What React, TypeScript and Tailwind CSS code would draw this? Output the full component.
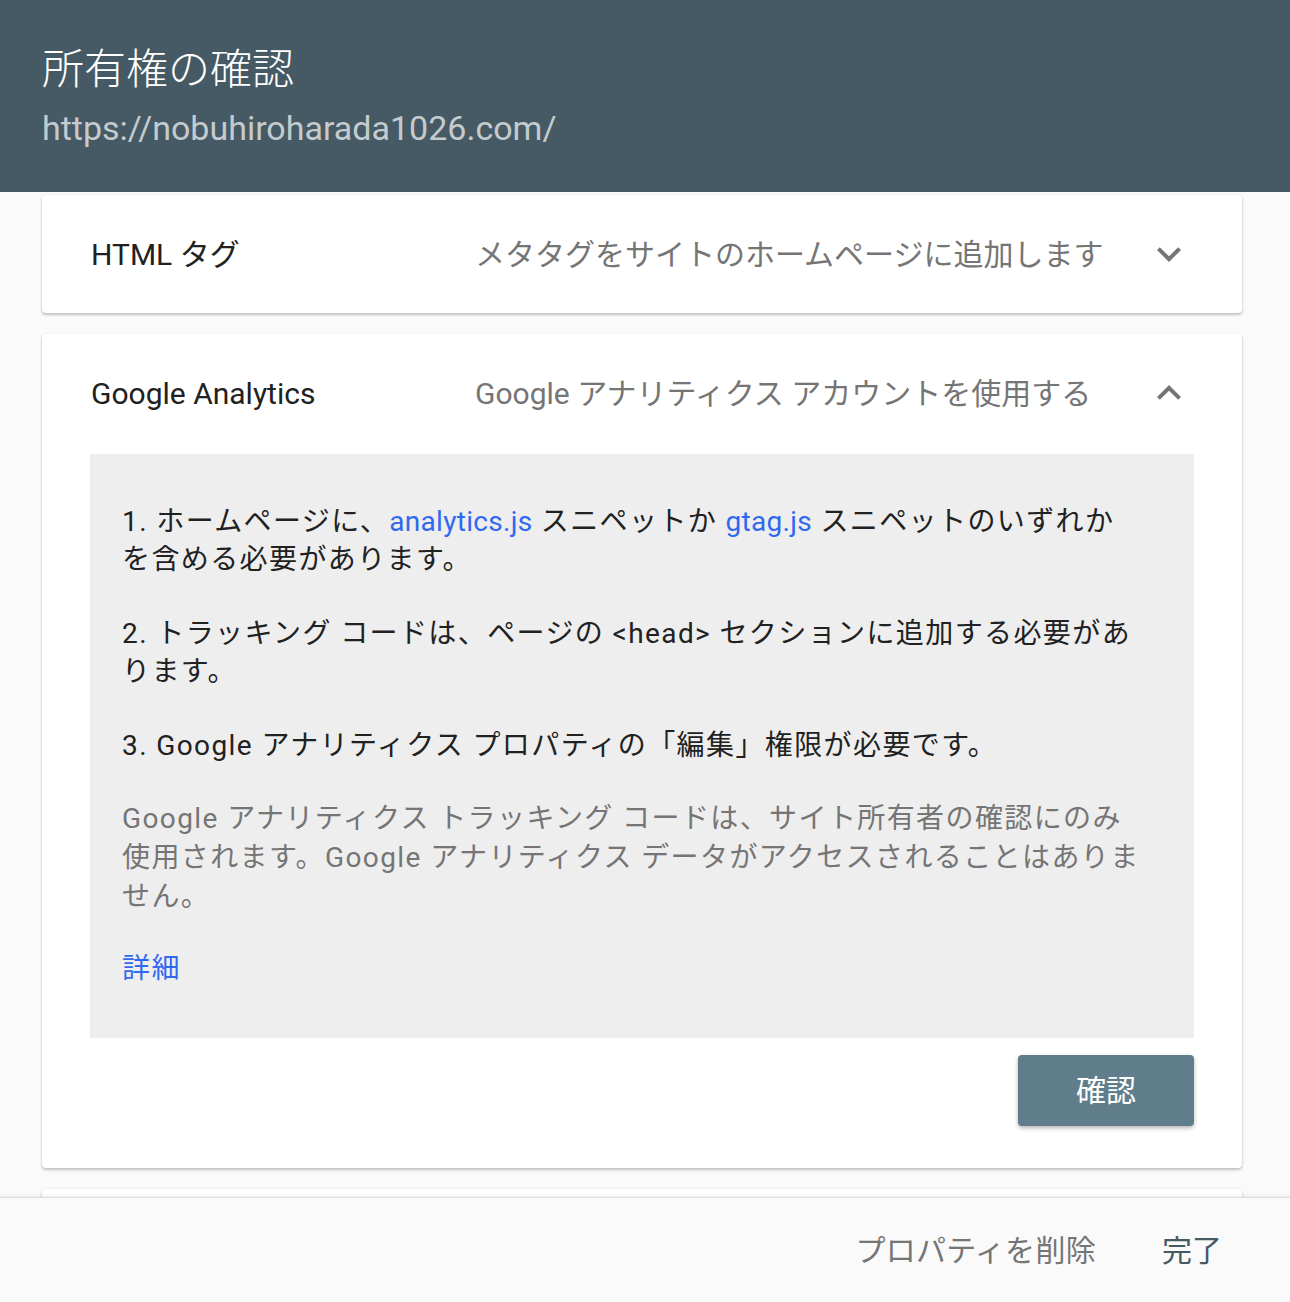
import React from 'react';

const FONT = "Roboto, 'Noto Sans CJK JP', 'Noto Sans', sans-serif";

const Chevron: React.FC<{ up?: boolean }> = ({ up }) => (
  <svg width="48" height="48" viewBox="0 0 24 24" className="shrink-0">
    <path
      d={up ? 'M7.41 15.41 12 10.83l4.59 4.58L18 14l-6-6-6 6z' : 'M7.41 8.59 12 13.17l4.59-4.58L18 10l-6 6-6-6z'}
      fill="#757575"
    />
  </svg>
);

const PanelHeader: React.FC<{ title: string; desc: string; up?: boolean }> = ({ title, desc, up }) => (
  <div className="flex h-[118px] items-center pl-[49px] pr-[49px]">
    <div className="w-[384px] shrink-0 text-[30px] text-[#212121]">{title}</div>
    <div className="flex-1 text-[30px] text-[#757575]">{desc}</div>
    <Chevron up={up} />
  </div>
);

const cardShadow = 'shadow-[0_2px_3px_rgba(0,0,0,0.22),0_0_2px_rgba(0,0,0,0.10)]';

export default function App() {
  return (
    <div className="flex h-[1302px] w-full flex-col overflow-hidden bg-[#fafafa]" style={{ fontFamily: FONT }}>
      {/* ヘッダー */}
      <div className="shrink-0 bg-[#455a64] px-[42px] pt-[44px] pb-[44px]">
        <div className="text-[42px] font-light leading-[52px] text-white">所有権の確認</div>
        <div className="mt-[12px] text-[34px] leading-[40px] text-white/70">https://nobuhiroharada1026.com/</div>
      </div>

      {/* パネル一覧 */}
      <div className="flex min-h-0 flex-1 flex-col gap-[21px] overflow-hidden pl-[42px] pr-[48px] pt-[3px]">
        <div className={`shrink-0 rounded bg-white ${cardShadow}`}>
          <PanelHeader title="HTML タグ" desc="メタタグをサイトのホームページに追加します" />
        </div>

        <div className={`shrink-0 rounded bg-white pb-[42px] ${cardShadow}`}>
          <PanelHeader title="Google Analytics" desc="Google アナリティクス アカウントを使用する" up />
          <div className="mx-[48px] mt-[2px] bg-[#eeeeee] px-[32px] pt-[49px] pb-[50px] text-[28px] leading-[38px] tracking-[1.4px]">
            <p className="mb-[36px] text-[#212121]">
              1. ホームページに、<span className="tracking-[0.3px] text-[#3069f0]">analytics.js</span> スニペットか{' '}
              <span className="tracking-[0.3px] text-[#3069f0]">gtag.js</span> スニペットのいずれか
              <br />
              を含める必要があります。
            </p>
            <p className="mb-[36px] text-[#212121]">
              2. トラッキング コードは、ページの &lt;head&gt; セクションに追加する必要があ
              <br />
              ります。
            </p>
            <p className="mb-[34px] text-[#212121]">3. Google アナリティクス プロパティの「編集」権限が必要です。</p>
            <p className="mb-[34px] leading-[39px] text-[#757575]">
              Google アナリティクス トラッキング コードは、サイト所有者の確認にのみ
              <br />
              使用されます。Google アナリティクス データがアクセスされることはありま
              <br />
              せん。
            </p>
            <a className="text-[#3069f0]">詳細</a>
          </div>
          <div className="mt-[17px] flex justify-end px-[48px]">
            <button className="h-[71px] w-[176px] rounded bg-[#607d8b] text-[30px] text-white shadow-[0_2px_4px_rgba(0,0,0,0.3)]">
              確認
            </button>
          </div>
        </div>

        <div className={`h-[118px] shrink-0 rounded bg-white ${cardShadow}`} />
      </div>

      {/* フッター */}
      <div className="relative z-10 flex h-[105px] shrink-0 items-center justify-end gap-[66px] border-t border-[#e0e0e0] bg-[#fafafa] pr-[68px] shadow-[0_-1px_3px_rgba(0,0,0,0.08)]">
        <span className="text-[30px] tracking-[0.3px] text-[#757575]">プロパティを削除</span>
        <span className="text-[30px] text-[#455a64]">完了</span>
      </div>
    </div>
  );
}
